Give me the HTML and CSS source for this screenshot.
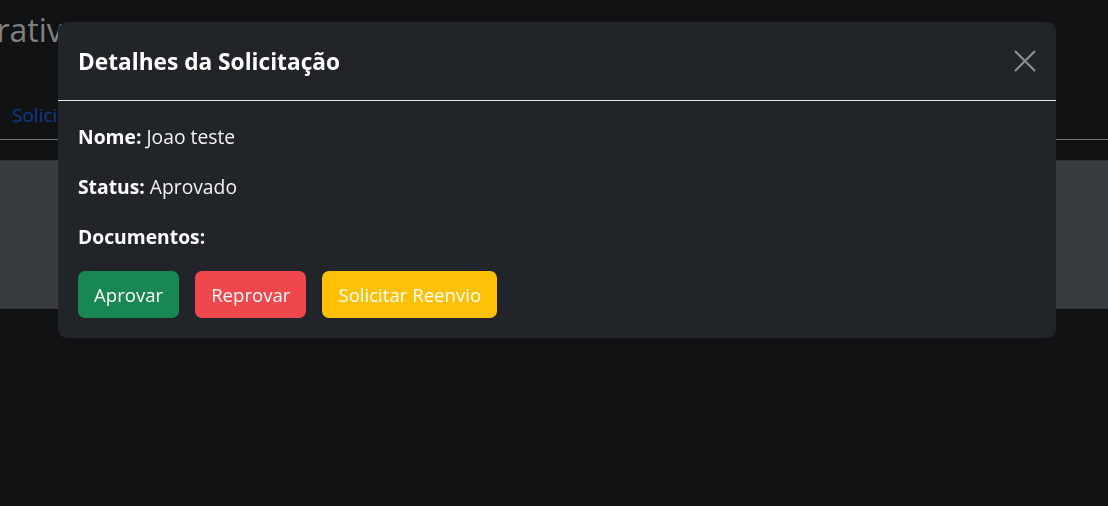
FILE: index.html
```html
<!DOCTYPE html>
<html lang="pt-BR">
<head>
<meta charset="utf-8">
<title>Detalhes da Solicitação</title>
<link rel="stylesheet" href="styles.css">
</head>
<body>
<div class="page">
  <header class="page-head">
    <h1 class="page-title">Painel Administrativo</h1>
  </header>
  <nav class="tabs">
    <a class="tab-link" href="#">Solicitações</a>
  </nav>
  <section class="panel"></section>
</div>

<div class="modal">
  <div class="modal-dialog">
    <div class="modal-header">
      <h5 class="modal-title">Detalhes da Solicitação</h5>
      <button class="btn-close" aria-label="Fechar">
        <svg viewBox="0 0 22 22" width="22" height="22"><path d="M1 1 L21 21 M21 1 L1 21" stroke="currentColor" stroke-width="2.2" fill="none"/></svg>
      </button>
    </div>
    <div class="modal-body">
      <p class="field"><strong>Nome:</strong> Joao teste</p>
      <p class="field"><strong>Status:</strong> Aprovado</p>
      <p class="field"><strong>Documentos:</strong></p>
      <div class="actions">
        <button class="btn btn-success">Aprovar</button>
        <button class="btn btn-danger">Reprovar</button>
        <button class="btn btn-warning">Solicitar Reenvio</button>
      </div>
    </div>
  </div>
</div>
</body>
</html>
```
FILE: styles.css
```css
html, body {
  margin: 0;
  padding: 0;
  height: 100%;
  overflow: hidden;
  background: #111214;
  font-family: "Open Sans", "Noto Sans", sans-serif;
}

.page {
  display: flex;
  flex-direction: column;
}

.page-head {
  height: 78px;
  width: 82px;
  display: flex;
  justify-content: flex-end;
  align-items: flex-start;
  overflow: hidden;
}

.page-title {
  margin: 9px 0 0;
  white-space: nowrap;
  font-size: 32px;
  line-height: 42px;
  font-weight: 500;
  color: #808080;
  flex-shrink: 0;
}

.tabs {
  height: 61px;
  display: flex;
  align-items: center;
  padding: 0 12px;
  border-bottom: 1px solid #6f7173;
}

.tab-link {
  font-size: 19px;
  color: #103a8a;
  text-decoration: none;
  margin-top: 12px;
}

.panel {
  margin-top: 20px;
  height: 148px;
  background: #383b3f;
  border-top: 1px solid #2e3135;
}

.modal {
  position: fixed;
  inset: 0;
  display: flex;
  align-items: flex-start;
}

.modal-dialog {
  margin: 22px 0 0 58px;
  width: 998px;
  background: #212529;
  border-radius: 9px;
  color: #f1f3f5;
  overflow: hidden;
}

.modal-header {
  display: flex;
  align-items: center;
  justify-content: space-between;
  padding: 20px 20px;
  height: 38px;
  border-bottom: 1px solid #dee2e6;
}

.modal-title {
  margin: 0;
  padding-top: 2px;
  font-size: 22.7px;
  font-weight: 700;
  line-height: 36px;
  color: #ffffff;
}

.btn-close {
  background: none;
  border: 0;
  padding: 0;
  width: 22px;
  height: 22px;
  color: #8c8e90;
  display: flex;
}

.modal-body {
  padding: 20px;
}

.field {
  margin: 0 0 20px;
  padding-top: 2px;
  font-size: 19.3px;
  line-height: 28px;
  color: #f1f3f5;
}

.field strong {
  font-weight: 700;
  color: #ffffff;
}

.actions {
  display: flex;
  gap: 16px;
}

.btn {
  font-family: inherit;
  font-size: 18.6px;
  line-height: 30px;
  height: 47px;
  padding: 0 15px;
  border: 1px solid transparent;
  border-radius: 7px;
  color: #ffffff;
}

.btn-success { background: #198754; }
.btn-danger  { background: #f0474c; }
.btn-warning { background: #ffc107; }
```
